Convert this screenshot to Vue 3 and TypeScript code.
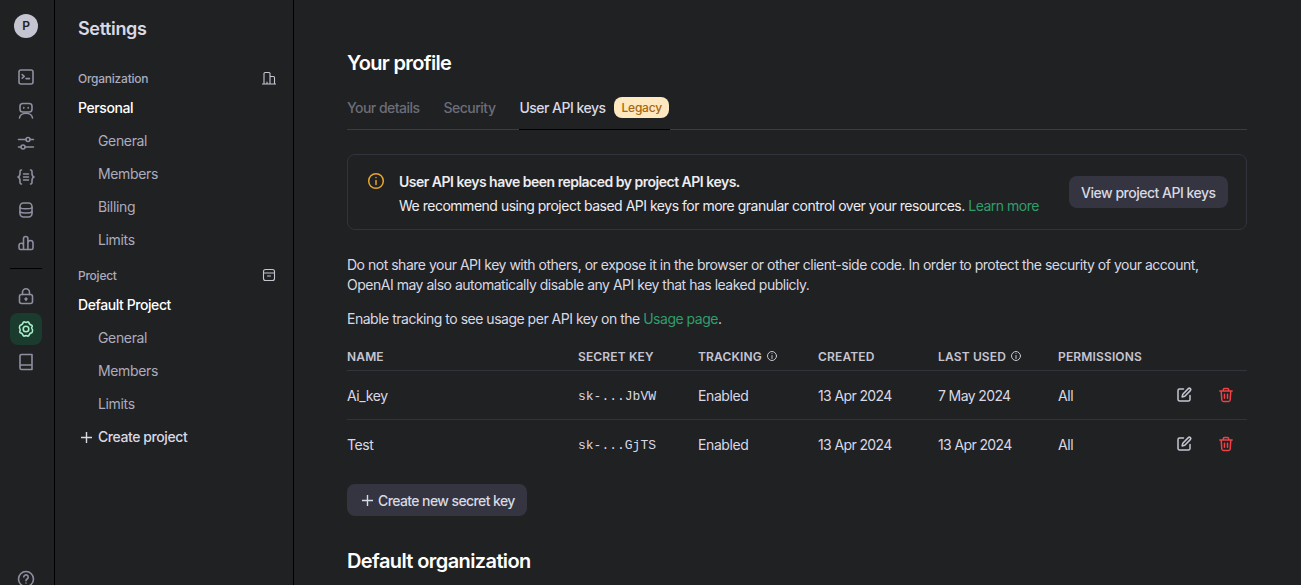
<script setup lang="ts">
interface NavItem { label: string; active?: boolean }

const personalLinks: string[] = ['General', 'Members', 'Billing', 'Limits']
const projectLinks: string[] = ['General', 'Members', 'Limits']

const tabs: NavItem[] = [
  { label: 'Your details' },
  { label: 'Security' },
  { label: 'User API keys', active: true },
]

const keys = [
  { name: 'Ai_key', secret: 'sk-...JbVW', tracking: 'Enabled', created: '13 Apr 2024', used: '7 May 2024', perms: 'All' },
  { name: 'Test', secret: 'sk-...GjTS', tracking: 'Enabled', created: '13 Apr 2024', used: '13 Apr 2024', perms: 'All' },
]
</script>

<template>
  <div class="page">
    <aside class="rail">
      <div class="avatar">P</div>
      <div class="rail-group">
        <span class="rail-btn">
          <svg viewBox="0 0 18 18"><rect x="2" y="2" width="14" height="14" rx="2" /><path d="M5.200 6.600 7.200 8.400 5.200 10.200M9 10.600h3.500" /></svg>
        </span>
        <span class="rail-btn">
          <svg viewBox="0 0 18 18"><rect x="3" y="2.500" width="12" height="8.500" rx="2.800" /><path d="M2.500 17c.3-2.600 3-4.800 6.500-4.800s6.200 2.200 6.500 4.800M6.800 6.500v.6M11.200 6.500v.6" /></svg>
        </span>
        <span class="rail-btn">
          <svg viewBox="0 0 18 18"><path d="M1.500 5.500H9M13 5.500h3.500M1.500 13H4M8 13h8.500" /><circle cx="11" cy="5.500" r="2" /><circle cx="6" cy="13" r="2" /></svg>
        </span>
        <span class="rail-btn">
          <svg viewBox="0 0 18 18"><path d="M4.500 2C2.800 2 3 3.500 3 5.500 3 7.500 2.800 8.500 1 9c1.800.5 2 1.500 2 3.500S2.800 16 4.500 16M13.500 2C15.200 2 15 3.500 15 5.500c0 2 .2 3 2 3.500-1.800.5-2 1.500-2 3.500s.2 3.500-1.500 3.500M6.500 6h5M6.500 9h5M6.500 12h5" /></svg>
        </span>
        <span class="rail-btn">
          <svg viewBox="0 0 18 18"><rect x="3" y="2" width="12" height="14" rx="3.500" /><path d="M3 6.800c2 1.300 10 1.300 12 0M3 11c2 1.300 10 1.300 12 0" /></svg>
        </span>
        <span class="rail-btn">
          <svg viewBox="0 0 18 18"><path d="M6.500 15.500V4.700a2.200 2.200 0 0 1 4.400 0v10.800M6.500 15.500H3.600A1.600 1.600 0 0 1 2 13.900v-2.400a2.250 2.250 0 0 1 4.500 0M10.900 15.500h3.500a1.600 1.600 0 0 0 1.600-1.600V9a2.550 2.550 0 0 0-5.100 0M6.500 15.500h4.400" /></svg>
        </span>
      </div>
      <div class="rail-sep"></div>
      <div class="rail-group">
        <span class="rail-btn">
          <svg viewBox="0 0 18 18"><rect x="2.500" y="7.500" width="13" height="9" rx="2" /><path d="M5.500 7.500V5.200a3.500 3.500 0 0 1 7 0v2.300M9 13.500v-2.300M8 12l1-1 1 1" /></svg>
        </span>
        <span class="rail-btn active">
          <svg viewBox="0 0 18 18"><path d="M7.300 1.800a3 3 0 0 0 3.400 0l1 .4c.5 1.600 1.300 2.800 3.200 3l.4 1c-.8 1.300-.8 2.300-.2 2.800.6.500.6 1.600.2 2.800l-.4 1c-1.700.2-2.700 1.400-3.200 3l-1 .4a3 3 0 0 0-3.400 0l-1-.4c-.5-1.600-1.500-2.800-3.200-3l-.4-1c.6-1.200.6-2.300.2-2.800-.6-.5-.6-1.500-.2-2.800l.4-1c1.900-.2 2.700-1.400 3.200-3z" /><circle cx="9" cy="9" r="2.800" /></svg>
        </span>
        <span class="rail-btn">
          <svg viewBox="0 0 18 18"><path d="M4.500 16.500A1.500 1.500 0 0 1 3 15V3a1.500 1.500 0 0 1 1.500-1.500H15v15zM3 13.500a1.500 1.500 0 0 1 1.500-1.500H15" /></svg>
        </span>
      </div>
      <span class="rail-btn help">
        <svg viewBox="0 0 18 18"><circle cx="9" cy="9" r="7.500" /><path d="M6.800 7a2.200 2.200 0 1 1 3.300 2c-.8.500-1.100.9-1.100 1.700M9 13v.01" /></svg>
      </span>
    </aside>

    <nav class="side">
      <div class="side-title">Settings</div>
      <div class="side-head">
        <span>Organization</span>
        <svg viewBox="0 0 14 14"><path d="M.5 13h13M2 13V2.500A1 1 0 0 1 3 1.500h4a1 1 0 0 1 1 1V13M8 5.500h3.500a1 1 0 0 1 1 1V13M5 13v-2" /></svg>
      </div>
      <div class="side-strong">Personal</div>
      <a v-for="l in personalLinks" :key="l" class="side-link">{{ l }}</a>
      <div class="side-head second">
        <span>Project</span>
        <svg viewBox="0 0 14 14"><rect x="1.500" y="1.500" width="11" height="11" rx="2" /><path d="M1.500 5h11M5.500 8h3" /></svg>
      </div>
      <div class="side-strong">Default Project</div>
      <a v-for="l in projectLinks" :key="l" class="side-link">{{ l }}</a>
      <a class="side-create">
        <svg class="plus" viewBox="0 0 11 11"><path d="M5.500 0v11M0 5.500h11" /></svg>
        Create project
      </a>
    </nav>

    <main class="main">
      <h1 class="title">Your profile</h1>

      <div class="tabs">
        <div v-for="t in tabs" :key="t.label" class="tab" :class="{ on: t.active }">
          {{ t.label }}
          <span v-if="t.active" class="badge">Legacy</span>
        </div>
      </div>

      <section class="notice">
        <svg class="notice-icon" viewBox="0 0 18 18"><circle cx="9" cy="9" r="7.300" /><path d="M9 8.500v4M9 5.500v.01" /></svg>
        <div class="notice-text">
          <strong>User API keys have been replaced by project API keys.</strong>
          <p>We recommend using project based API keys for more granular control over your resources. <a>Learn more</a></p>
        </div>
        <button class="btn">View project API keys</button>
      </section>

      <p class="para first">Do not share your API key with others, or expose it in the browser or other client-side code. In order to protect the security of your account, OpenAI may also automatically disable any API key that has leaked publicly.</p>
      <p class="para second">Enable tracking to see usage per API key on the <a>Usage page</a>.</p>

      <div class="table">
        <div class="row head">
          <span>NAME</span>
          <span>SECRET KEY</span>
          <span class="with-info">TRACKING
            <svg viewBox="0 0 12 12"><circle cx="6" cy="6" r="4.500" /><path d="M6 5.500v3M6 3.600v.01" /></svg>
          </span>
          <span>CREATED</span>
          <span class="with-info">LAST USED
            <svg viewBox="0 0 12 12"><circle cx="6" cy="6" r="4.500" /><path d="M6 5.500v3M6 3.600v.01" /></svg>
          </span>
          <span>PERMISSIONS</span>
          <span></span>
        </div>
        <div v-for="k in keys" :key="k.name" class="row body">
          <span>{{ k.name }}</span>
          <span class="mono">{{ k.secret }}</span>
          <span>{{ k.tracking }}</span>
          <span class="date">{{ k.created }}</span>
          <span class="date">{{ k.used }}</span>
          <span>{{ k.perms }}</span>
          <span class="actions">
            <svg class="edit" viewBox="0 0 16 16"><path d="M7.500 2H3.500A1.500 1.500 0 0 0 2 3.500v9A1.500 1.500 0 0 0 3.500 14h9a1.500 1.500 0 0 0 1.500-1.500V8.500" /><path d="M12.300 1.600a1.400 1.400 0 0 1 2 2L8.800 9.200l-2.700.7.700-2.700z" /></svg>
            <svg class="trash" viewBox="0 0 16 16"><path d="M1.800 4h12.400M5.300 4V2.800A1.300 1.300 0 0 1 6.600 1.500h2.800a1.300 1.300 0 0 1 1.300 1.300V4M3.200 4l.6 9a1.700 1.700 0 0 0 1.700 1.500h5a1.700 1.700 0 0 0 1.700-1.500l.6-9M6.500 7.200v4M9.500 7.200v4" /></svg>
          </span>
        </div>
      </div>

      <button class="btn create">
        <svg class="plus" viewBox="0 0 11 11"><path d="M5.500 0v11M0 5.500h11" /></svg>
        Create new secret key
      </button>

      <h2 class="title org">Default organization</h2>
    </main>
  </div>
</template>

<style>
html, body { margin: 0; background: #202123; overflow: hidden; }
</style>

<style scoped>
.page {
  display: flex;
  width: 1301px;
  height: 585px;
  overflow: hidden;
  background: #202123;
  color: #ececf1;
  font-family: Inter, "Liberation Sans", sans-serif;
  font-size: 14px;
  letter-spacing: -0.35px;
}

.rail {
  position: relative;
  flex: 0 0 52px;
  display: flex;
  flex-direction: column;
  align-items: center;
  padding: 14px 2px 0 0;
  border-right: 1px solid #000;
}
.avatar {
  width: 24px;
  height: 24px;
  border-radius: 50%;
  background: #c5c5d2;
  color: #202123;
  font-size: 12px;
  font-weight: 600;
  line-height: 24px;
  text-align: center;
  letter-spacing: 0;
}
.rail-group {
  display: flex;
  flex-direction: column;
  gap: 1.200px;
  margin-top: 23px;
}
.rail-sep + .rail-group { margin-top: 11px; }
.rail-btn {
  width: 32px;
  height: 32px;
  display: flex;
  align-items: center;
  justify-content: center;
  border-radius: 8px;
  color: #8e8ea0;
}
.rail-btn svg, .side-head svg, .notice-icon, .with-info svg, .actions svg, .plus {
  fill: none;
  stroke: currentColor;
  stroke-linecap: round;
  stroke-linejoin: round;
}
.rail-btn svg { width: 18px; height: 18px; stroke-width: 1.600; }
.rail-btn.active { background: #1a3b2e; color: #a8f0c8; }
.rail-sep {
  width: 32px;
  height: 1px;
  margin-top: 9px;
  background: #000;
}
.help { position: absolute; left: 10px; top: 563px; }

.side {
  flex: 0 0 239px;
  box-sizing: border-box;
  padding: 0 17px 0 23px;
  border-right: 1px solid #000;
}
.side-title {
  margin-top: 18px;
  font-size: 18px;
  line-height: 22px;
  font-weight: 600;
  color: #d9d9e3;
}
.side-head {
  display: flex;
  align-items: center;
  justify-content: space-between;
  margin-top: 29px;
  height: 18px;
  font-size: 12px;
  font-weight: 500;
  color: #acacbe;
  letter-spacing: -0.25px;
}
.side-head.second { margin-top: 16px; }
.side-head svg { width: 14px; height: 14px; color: #c5c5d2; stroke-width: 1.100; }
.side-strong {
  margin-top: 11px;
  line-height: 20px;
  font-weight: 500;
  color: #fff;
  letter-spacing: -0.42px;
}
.side-link {
  display: block;
  margin-top: 13px;
  padding-left: 20px;
  line-height: 20px;
  color: #acacbe;
}
.side-create {
  display: flex;
  align-items: center;
  margin-top: 13px;
  line-height: 20px;
  font-weight: 500;
  color: #d9d9e3;
  letter-spacing: -0.42px;
}
.plus {
  width: 11px;
  height: 11px;
  stroke-width: 1.400;
  stroke-linecap: butt;
}
.side-create .plus { margin: 0 6px 0 3px; }

.main {
  flex: 0 0 900px;
  margin-left: 53px;
  letter-spacing: -0.49px;
}
.title {
  margin: 50px 0 0;
  font-size: 20px;
  line-height: 26px;
  font-weight: 600;
  color: #fff;
  letter-spacing: -0.65px;
}
.tabs {
  display: flex;
  gap: 24px;
  margin-top: 8px;
  height: 45px;
  border-bottom: 1px solid #3a3b45;
}
.tab {
  display: flex;
  align-items: center;
  box-sizing: border-box;
  height: 45px;
  padding-top: 2px;
  color: #6c6d78;
  font-weight: 500;
  letter-spacing: -0.52px;
}
.tab.on {
  color: #d9d9e3;
  height: 46px;
  padding-right: 1px;
  border-bottom: 1px solid #000;
}
.badge {
  margin-left: 9px;
  padding: 0 7px;
  height: 21px;
  line-height: 21px;
  border-radius: 8px;
  background: #fde8c0;
  color: #a7660f;
  font-size: 12px;
  letter-spacing: -0.2px;
}

.notice {
  display: flex;
  align-items: center;
  margin-top: 24px;
  height: 76px;
  box-sizing: border-box;
  padding: 0 18px 0 19px;
  border: 1px solid #32333d;
  border-radius: 8px;
}
.notice-icon {
  align-self: flex-start;
  width: 18px;
  height: 18px;
  margin-top: 17px;
  color: #e8a72e;
  stroke-width: 1.500;
}
.notice-text {
  flex: 1;
  margin-left: 14px;
  padding-top: 4px;
  line-height: 24px;
}
.notice-text strong { display: block; font-weight: 600; letter-spacing: -0.5px; }
.notice-text p { margin: 0; }
a { color: #2f9e6b; }

.btn {
  height: 32px;
  padding: 0 12.500px;
  border: 0;
  border-radius: 8px;
  background: #343541;
  color: #d9d9e3;
  font: inherit;
  font-weight: 500;
  letter-spacing: -0.5px;
}

.para {
  margin: 0;
  line-height: 20px;
  color: #d9d9e3;
}
.para.first { margin-top: 25px; }
.para.second { margin-top: 14px; }

.table { margin-top: 13px; }
.row {
  display: grid;
  grid-template-columns: 231px 120px 120px 120px 120px 1fr 76px;
  align-items: center;
  border-bottom: 1px solid #32333d;
}
.row.head {
  height: 28px;
  font-size: 12px;
  font-weight: 600;
  letter-spacing: 0.15px;
  color: #c5c5d2;
}
.row.body { height: 48px; color: #d9d9e3; letter-spacing: -0.4px; }
.row.body:last-child { border-bottom: 0; }
.mono { padding-top: 2px; font-family: "Liberation Mono", monospace; font-size: 13px; letter-spacing: 0; }
.date { letter-spacing: -0.62px; }
.with-info { display: flex; align-items: center; gap: 4px; }
.with-info svg { width: 12px; height: 12px; stroke-width: 1; }
.actions { display: flex; align-items: center; gap: 26px; padding-left: 5px; }
.actions svg { width: 16px; height: 16px; stroke-width: 1.500; }
.edit { color: #c5c5d2; }
.trash { color: #ef4146; }

.btn.create {
  display: flex;
  align-items: center;
  gap: 5px;
  margin-top: 16px;
  padding: 0 12px 0 15px;
  letter-spacing: -0.6px;
}
.title.org { margin-top: 32px; letter-spacing: -0.6px; }
</style>
